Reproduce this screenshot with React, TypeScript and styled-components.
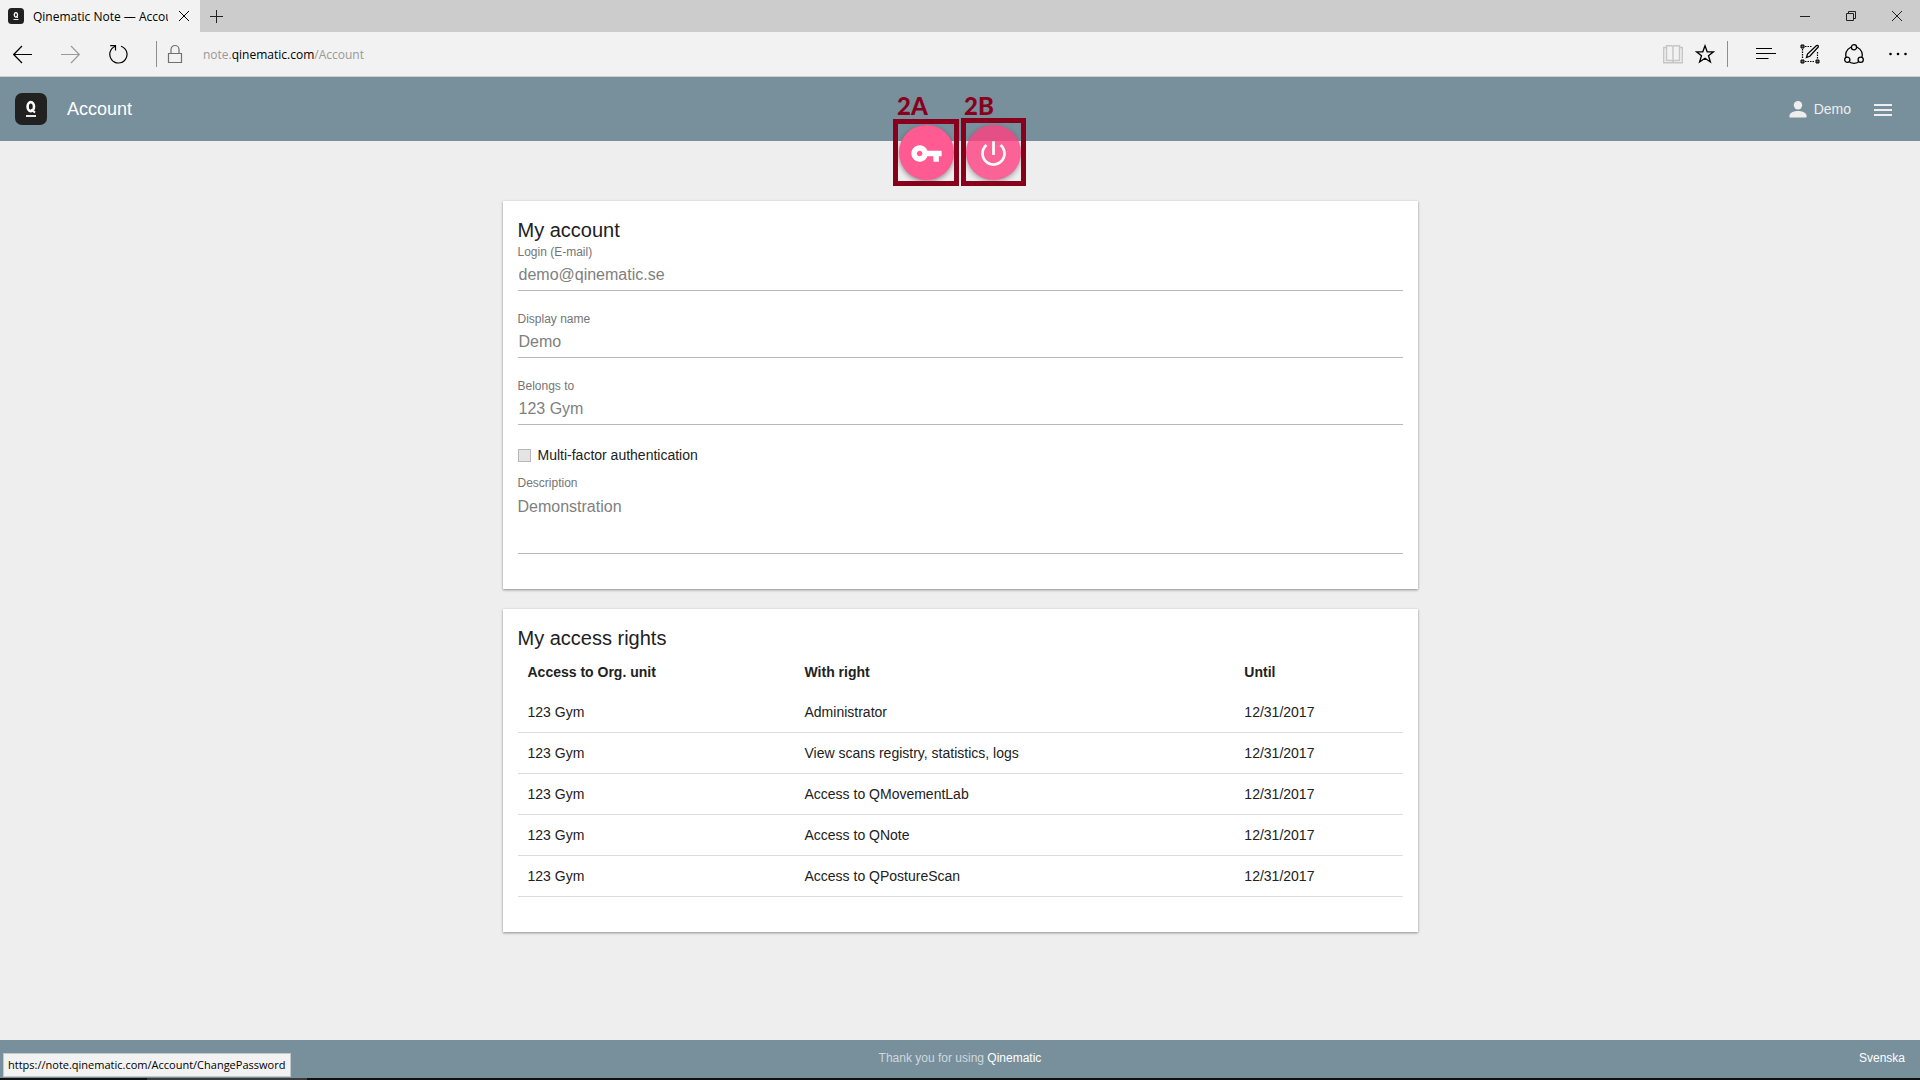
import React from "react";
import styled, { createGlobalStyle, css } from "styled-components";

const sans = `"Liberation Sans", Arial, sans-serif`;
const chrome = `"Open Sans", "Segoe UI", sans-serif`;

const GlobalStyle = createGlobalStyle`
  *, *::before, *::after { box-sizing: border-box; }
  body { margin: 0; background: #eeeeee; color: #212121; font-family: ${sans}; }
  button { border: 0; padding: 0; background: none; font: inherit; color: inherit; cursor: pointer; }
  a { text-decoration: none; color: inherit; }
  svg { display: block; }
`;

const Page = styled.div`
  position: relative;
  min-height: 100vh;
  display: flex;
  flex-direction: column;
`;

/* Browser window */
const TabStrip = styled.div`
  display: flex;
  height: 32px;
  background: #cccccc;
  font-family: ${chrome};
`;

const Tab = styled.div`
  display: flex;
  align-items: center;
  width: 200px;
  padding: 0 8px;
  background: #f2f2f2;
  font-size: 12px;
  color: #000000;
`;

const TabTitle = styled.span`
  flex: 1;
  margin: 0 8px 0 9px;
  overflow: hidden;
  white-space: nowrap;
`;

const TabButton = styled.button`
  display: grid;
  place-items: center;
  width: 16px;
  height: 32px;
`;

const NewTab = styled(TabButton)`
  width: 32px;
`;

const WindowControls = styled.div`
  display: flex;
  margin-left: auto;
`;

const WindowButton = styled(TabButton)`
  width: 46px;
`;

const Toolbar = styled.div`
  display: flex;
  align-items: center;
  height: 45px;
  padding: 0 12px 0 13px;
  border-bottom: 1px solid #cfcfcb;
  background: #f2f2f2;
  font-family: ${chrome};
`;

const ToolGroup = styled.div<{ $gap: number }>`
  display: flex;
  gap: ${(p) => p.$gap}px;
`;

const ToolButton = styled.button<{ $tone?: string }>`
  width: 20px;
  height: 20px;
  color: ${(p) => p.$tone ?? "#000000"};
`;

const Divider = styled.span<{ $left: number; $right: number }>`
  width: 1px;
  height: 26px;
  margin: 0 ${(p) => p.$right}px 0 ${(p) => p.$left}px;
  background: #8e8e8e;
`;

const Address = styled.div`
  flex: 1;
  margin-left: 18px;
  font-size: 12px;
  color: #999999;
  outline: 0;
  b { font-weight: 400; color: #000000; }
`;

/* Site */
const Header = styled.header`
  display: flex;
  align-items: center;
  height: 64px;
  padding: 0 25px 0 15px;
  background: #78909c;
`;

const HeaderTitle = styled.h1`
  margin: 0 auto 0 20px;
  font-size: 18px;
  font-weight: 400;
  color: #ffffff;
`;

const UserLink = styled.a`
  display: flex;
  align-items: center;
  gap: 4px;
  margin-right: 20px;
  font-size: 14px;
  color: #eeeeee;
`;

const MenuButton = styled.button`
  color: #eeeeee;
`;

const Actions = styled.div`
  display: flex;
  justify-content: center;
  gap: 12px;
  margin-top: -16px;
  margin-bottom: 21px;
`;

const ActionSlot = styled.div`
  position: relative;
`;

const Fab = styled.button<{ $faded?: boolean }>`
  display: grid;
  place-items: center;
  width: 55px;
  height: 55px;
  padding-top: 2px;
  border-radius: 50%;
  background: ${(p) => (p.$faded ? "#ff4081" : "#ff5a92")};
  color: #ffffff;
  box-shadow: 0 2px 5px rgba(0, 0, 0, 0.4);
  ${(p) => p.$faded && css`opacity: 0.8;`}
`;

const Marker = styled.span<{ $inset: string }>`
  position: absolute;
  inset: ${(p) => p.$inset};
  border: 5px solid #88001b;
  pointer-events: none;
`;

const MarkerLabel = styled.span`
  position: absolute;
  left: -2px;
  bottom: 59px;
  font: 900 24px/30px Lato, Carlito, sans-serif;
  color: #88001b;
`;

const Main = styled.main`
  flex: 1;
  display: flex;
  flex-direction: column;
  gap: 20px;
  width: 100%;
  max-width: 915px;
  margin: 0 auto;
  padding-bottom: 20px;
`;

const Card = styled.section`
  padding: 15px 15px 35px;
  background: #ffffff;
  box-shadow: 0 1px 3px rgba(0, 0, 0, 0.2), 0 1px 2px rgba(0, 0, 0, 0.24);
`;

const CardTitle = styled.h2`
  margin: 0;
  font-size: 20px;
  line-height: 28px;
  font-weight: 400;
`;

const Form = styled.form`
  display: flex;
  flex-direction: column;
  gap: 20px;
`;

const Field = styled.div`
  display: flex;
  flex-direction: column;
`;

const Label = styled.label`
  font-size: 12px;
  line-height: 16px;
  color: #757575;
`;

const control = css`
  width: 100%;
  margin: 0;
  border: 0;
  border-bottom: 1px solid #b9b9b9;
  border-radius: 0;
  background: transparent;
  font: 16px/18px ${sans};
  color: #808080;
  outline: 0;
`;

const TextInput = styled.input`
  ${control}
  height: 31px;
  padding: 0 1px;
`;

const TextArea = styled.textarea`
  ${control}
  display: block;
  height: 63px;
  padding: 7px 0;
  resize: none;
`;

const LastFields = styled.div`
  display: flex;
  flex-direction: column;
  gap: 10px;
`;

const CheckRow = styled.div`
  display: flex;
  align-items: center;
  gap: 7px;
  font-size: 14px;
  line-height: 20px;
`;

const CheckBox = styled.input`
  appearance: none;
  width: 13px;
  height: 13px;
  margin: 0;
  border: 1px solid #b8b8b8;
  background: #e4e4e4;
`;

const Table = styled.table`
  width: 100%;
  table-layout: fixed;
  border-collapse: separate;
  border-spacing: 0;
  font-size: 14px;
  line-height: 20px;
  text-align: left;
`;

const Column = styled.col<{ $share: number }>`
  width: ${(p) => p.$share}%;
`;

const HeadCell = styled.th`
  padding: 10px;
  font-weight: 700;
`;

const Cell = styled.td`
  padding: 10px;
  border-bottom: 1px solid #dddddd;
`;

const Footer = styled.footer`
  display: grid;
  grid-template-columns: 1fr auto 1fr;
  height: 38px;
  padding: 0 15px;
  background: #78909c;
  font-size: 12px;
  line-height: 36px;
  color: #cfd8dc;
`;

const FooterLink = styled.a<{ $end?: boolean }>`
  color: #ffffff;
  ${(p) => p.$end && css`grid-column: 3; justify-self: end;`}
`;

const FooterText = styled.span`
  grid-column: 2;
`;

const TaskbarEdge = styled.div`
  height: 2px;
  padding-left: 147px;
  background: #101010;
  &::before { content: ""; display: block; width: 160px; height: 2px; background: #3a3a3a; }
`;

const StatusBubble = styled.div`
  position: absolute;
  left: 3px;
  bottom: 3px;
  padding: 0 5px 0 4px;
  border: 1px solid #c4c8ca;
  background: #f2f2f2;
  font: 11px/22px ${chrome};
  color: #000000;
`;

const Glyph = ({ size = 20, stroke = 1, children }: { size?: number; stroke?: number; children: React.ReactNode }) => (
  <svg width={size} height={size} viewBox={`0 0 ${size} ${size}`} fill="none" stroke="currentColor" strokeWidth={stroke} aria-hidden="true">
    {children}
  </svg>
);

const Logo = ({ size }: { size: number }) => (
  <svg width={size} height={size} viewBox="0 0 32 32" aria-hidden="true">
    <rect width="32" height="32" rx="7" fill="#212121" />
    <ellipse cx="15.8" cy="13.6" rx="3.2" ry="4.5" fill="none" stroke="#ffffff" strokeWidth="2.6" />
    <path d="M16 16.500l4 3" stroke="#ffffff" strokeWidth="2" />
    <path d="M11 23h10" stroke="#ffffff" strokeWidth="1.8" />
  </svg>
);

const fields = [
  { id: "login", label: "Login (E-mail)", value: "demo@qinematic.se" },
  { id: "display-name", label: "Display name", value: "Demo" },
  { id: "belongs-to", label: "Belongs to", value: "123 Gym" },
];

const rights = [
  "Administrator",
  "View scans registry, statistics, logs",
  "Access to QMovementLab",
  "Access to QNote",
  "Access to QPostureScan",
];

export default function App() {
  return (
    <Page>
      <GlobalStyle />
      <TabStrip>
        <Tab>
          <Logo size={16} />
          <TabTitle>Qinematic Note — Account</TabTitle>
          <TabButton aria-label="Close tab">
            <Glyph size={12}><path d="M1 1l10 10M11 1L1 11" /></Glyph>
          </TabButton>
        </Tab>
        <NewTab aria-label="New tab">
          <Glyph size={13}><path d="M6.500 0v13M0 6.500h13" /></Glyph>
        </NewTab>
        <WindowControls>
          <WindowButton aria-label="Minimize">
            <Glyph size={10}><path d="M0 5.500h10" /></Glyph>
          </WindowButton>
          <WindowButton aria-label="Restore">
            <Glyph size={10}><path d="M.5 2.500h7v7h-7zM2.500 2.500v-2h7v7h-2" /></Glyph>
          </WindowButton>
          <WindowButton aria-label="Close window">
            <Glyph size={10}><path d="M0 0l10 10M10 0L0 10" /></Glyph>
          </WindowButton>
        </WindowControls>
      </TabStrip>

      <Toolbar>
        <ToolGroup $gap={28}>
          <ToolButton aria-label="Back">
            <Glyph stroke={1.2}><path d="M.7 10.500H19M9 2L.7 10.500 9 19" /></Glyph>
          </ToolButton>
          <ToolButton aria-label="Forward" $tone="#9a9a9a">
            <Glyph stroke={1.2}><path d="M0 10.500h18.300M10 2l8.300 8.500L10 19" /></Glyph>
          </ToolButton>
          <ToolButton aria-label="Refresh">
            <Glyph stroke={1.2}><path d="M12 2.200A8.600 8.600 0 1 1 6.500 2.300M1.200 1.700h5.300v4.800" /></Glyph>
          </ToolButton>
        </ToolGroup>
        <Divider $left={27} $right={8} />
        <ToolButton aria-label="Site information" $tone="#707070">
          <Glyph stroke={1.2}><path d="M3.500 9.500h13v9h-13zM6 9.500V5.500a4 4 0 0 1 8 0v4" /></Glyph>
        </ToolButton>
        <Address role="textbox" aria-label="Address" tabIndex={0}>
          note.<b>qinematic.com</b>/Account
        </Address>
        <ToolGroup $gap={12}>
          <ToolButton aria-label="Reading view" $tone="#c6c6c6">
            <Glyph stroke={1.4}>
              <path d="M3.500 1.700H8.500Q10 1.700 10 3 10 1.700 11.500 1.700H16.500V16.500H11.500Q10 16.500 10 18 10 16.500 8.500 16.500H3.500zM10 3v15M3.500 3.500H.7V18.800H19.300V3.500H16.500" />
            </Glyph>
          </ToolButton>
          <ToolButton aria-label="Add to favorites">
            <Glyph stroke={1.3}><path d="M10 1.800l2.200 6h6.300l-5 3.900 1.900 6.300L10 14.200l-5.400 3.800 1.900-6.300-5-3.900h6.300z" /></Glyph>
          </ToolButton>
        </ToolGroup>
        <Divider $left={12} $right={28} />
        <ToolGroup $gap={24}>
          <ToolButton aria-label="Hub">
            <Glyph><path d="M0 4.500h16M0 9.500h20M0 14.500h12.500" /></Glyph>
          </ToolButton>
          <ToolButton aria-label="Make a web note">
            <Glyph>
              <path d="M5 2.500h7M2.500 5v10M5 17.500h10M17.500 8v7" strokeWidth="1.200" strokeDasharray="1.500 1" />
              <path d="M1 1h3v3H1zM1 16h3v3H1zM16 16h3v3h-3z" fill="#666666" />
              <path d="M6.500 13.500l1-3.500 9-8.500q2-.7 1.800 1.500l-8.500 9.300z" strokeWidth="1.300" />
            </Glyph>
          </ToolButton>
          <ToolButton aria-label="Share">
            <Glyph stroke={1.3}>
              <circle cx="10" cy="11" r="8.300" />
              <circle cx="10" cy="3.300" r="2.600" fill="#f2f2f2" />
              <circle cx="3.300" cy="15.700" r="2.600" fill="#f2f2f2" />
              <circle cx="16.700" cy="15.700" r="2.600" fill="#f2f2f2" />
            </Glyph>
          </ToolButton>
          <ToolButton aria-label="More actions">
            <svg width="20" height="20" viewBox="0 0 20 20" fill="currentColor" aria-hidden="true">
              <circle cx="2.500" cy="10" r="1.300" />
              <circle cx="10" cy="10" r="1.300" />
              <circle cx="17.500" cy="10" r="1.300" />
            </svg>
          </ToolButton>
        </ToolGroup>
      </Toolbar>

      <Header>
        <Logo size={32} />
        <HeaderTitle>Account</HeaderTitle>
        <UserLink href="#user">
          <svg width="24" height="24" viewBox="0 0 24 24" fill="currentColor" aria-hidden="true">
            <circle cx="12" cy="8.300" r="4.200" />
            <path d="M3.500 20.500v-2c0-3.200 5.500-4.500 8.500-4.500s8.500 1.300 8.500 4.500v2z" />
          </svg>
          Demo
        </UserLink>
        <MenuButton aria-label="Menu">
          <svg width="24" height="24" viewBox="0 0 24 24" fill="currentColor" aria-hidden="true">
            <path d="M3 7h18v2H3zM3 12h18v2H3zM3 17h18v2H3z" />
          </svg>
        </MenuButton>
      </Header>

      <Actions>
        <ActionSlot>
          <Fab aria-label="Change password">
            <svg width="33" height="33" viewBox="0 0 24 24" fill="currentColor" aria-hidden="true">
              <path d="M12.650 10C11.830 7.670 9.610 6 7 6c-3.310 0-6 2.690-6 6s2.690 6 6 6c2.610 0 4.830-1.670 5.650-4H17v4h4v-4h2v-4H12.650zM7 14c-1.100 0-2-.9-2-2s.9-2 2-2 2 .9 2 2-.9 2-2 2z" />
            </svg>
          </Fab>
          <Marker $inset="-6px -5px -6px -6px" />
          <MarkerLabel>2A</MarkerLabel>
        </ActionSlot>
        <ActionSlot>
          <Fab $faded aria-label="Log out">
            <svg width="33" height="33" viewBox="0 0 24 24" fill="currentColor" aria-hidden="true">
              <path d="M13 3h-2v10h2V3zm4.830 2.170l-1.420 1.420C17.990 7.860 19 9.810 19 12c0 3.870-3.130 7-7 7s-7-3.130-7-7c0-2.190 1.010-4.140 2.580-5.420L6.170 5.170C4.230 6.820 3 9.260 3 12c0 4.970 4.030 9 9 9s9-4.030 9-9c0-2.740-1.230-5.180-3.170-6.830z" />
            </svg>
          </Fab>
          <Marker $inset="-7px -5px -6px -5px" />
          <MarkerLabel>2B</MarkerLabel>
        </ActionSlot>
      </Actions>

      <Main>
        <Card>
          <CardTitle>My account</CardTitle>
          <Form>
            {fields.map((f) => (
              <Field key={f.id}>
                <Label htmlFor={f.id}>{f.label}</Label>
                <TextInput id={f.id} defaultValue={f.value} readOnly />
              </Field>
            ))}
            <LastFields>
              <CheckRow>
                <CheckBox type="checkbox" id="mfa" disabled />
                <label htmlFor="mfa">Multi-factor authentication</label>
              </CheckRow>
              <Field>
                <Label htmlFor="description">Description</Label>
                <TextArea id="description" defaultValue="Demonstration" readOnly />
              </Field>
            </LastFields>
          </Form>
        </Card>

        <Card>
          <CardTitle>My access rights</CardTitle>
          <Table>
            <colgroup>
              <Column $share={31.3} />
              <Column $share={49.7} />
              <Column $share={19} />
            </colgroup>
            <thead>
              <tr>
                <HeadCell scope="col">Access to Org. unit</HeadCell>
                <HeadCell scope="col">With right</HeadCell>
                <HeadCell scope="col">Until</HeadCell>
              </tr>
            </thead>
            <tbody>
              {rights.map((right) => (
                <tr key={right}>
                  <Cell>123 Gym</Cell>
                  <Cell>{right}</Cell>
                  <Cell>12/31/2017</Cell>
                </tr>
              ))}
            </tbody>
          </Table>
        </Card>
      </Main>

      <Footer>
        <FooterText>
          Thank you for using <FooterLink href="#qinematic">Qinematic</FooterLink>
        </FooterText>
        <FooterLink $end href="#sv">Svenska</FooterLink>
      </Footer>
      <TaskbarEdge />
      <StatusBubble>https://note.qinematic.com/Account/ChangePassword</StatusBubble>
    </Page>
  );
}
